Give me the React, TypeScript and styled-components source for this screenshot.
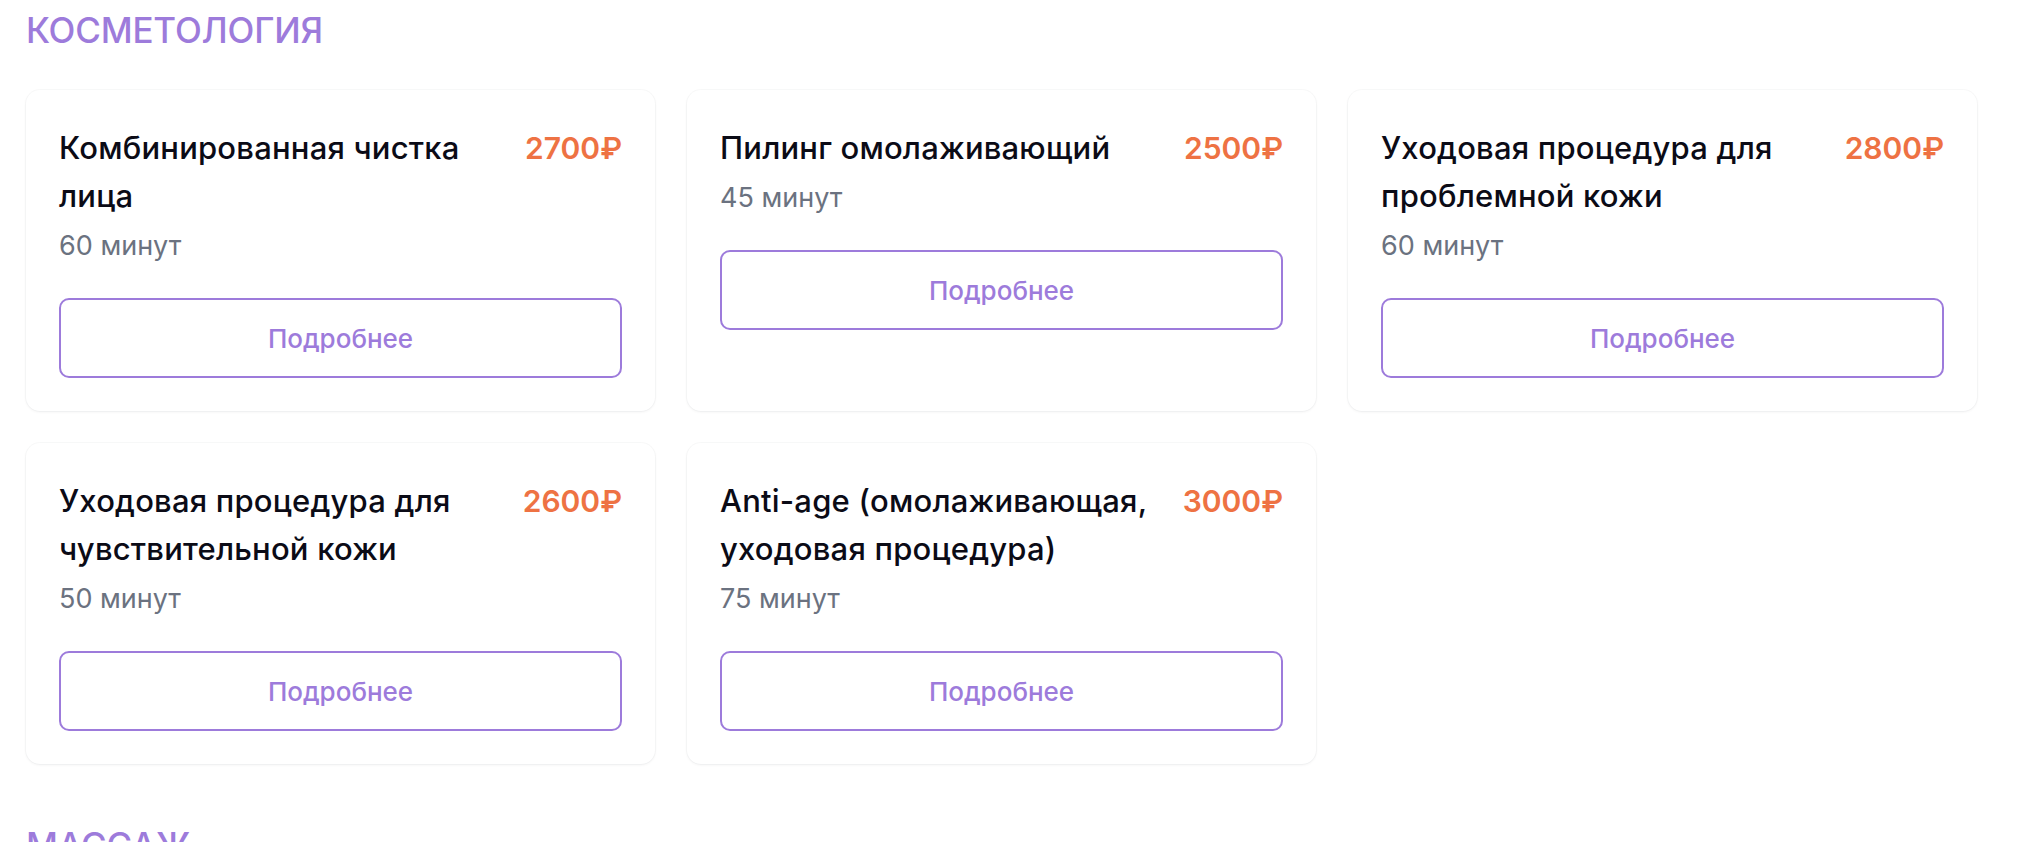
import React from "react";
import styled, { createGlobalStyle } from "styled-components";

const GlobalStyle = createGlobalStyle`
  * { box-sizing: border-box; }
  html, body { margin: 0; padding: 0; background: #ffffff; }
  body {
    font-family: Inter, "Noto Sans", "Liberation Sans", sans-serif;
    -webkit-font-smoothing: antialiased;
  }
`;

const Page = styled.main`
  width: 1977px;
  padding: 8px 0 40px 26px;
`;

const Section = styled.section`
  & + & {
    margin-top: 59px;
  }
`;

const SectionTitle = styled.h2`
  margin: 0;
  font-size: 35px;
  line-height: 44px;
  font-weight: 500;
  letter-spacing: -0.2px;
  color: #9d7bdb;
  text-transform: uppercase;
`;

const Grid = styled.div`
  margin-top: 38px;
  display: grid;
  grid-template-columns: repeat(3, 629px);
  gap: 32px;
`;

const Card = styled.article`
  display: flex;
  flex-direction: column;
  background: #ffffff;
  border-radius: 14px;
  padding: 34px 33px 33px;
  box-shadow: 0 1px 3px rgba(17, 24, 39, 0.06), 0 0 0 1px rgba(17, 24, 39, 0.025);
`;

const CardHead = styled.div`
  display: flex;
  align-items: flex-start;
  justify-content: space-between;
  gap: 32px;
`;

const ServiceName = styled.h3`
  margin: 0;
  flex: 1;
  font-size: 31px;
  line-height: 48px;
  font-weight: 500;
  letter-spacing: 0.2px;
  color: #0b0b16;
`;

const Price = styled.span`
  flex: none;
  font-size: 30px;
  line-height: 48px;
  font-weight: 600;
  color: #ee7243;
`;

const Duration = styled.p`
  margin: 10px 0 0;
  font-size: 27px;
  line-height: 32px;
  font-weight: 400;
  color: #6b7280;
`;

const MoreButton = styled.button`
  margin-top: 36px;
  height: 80px;
  width: 100%;
  border: 2px solid #9d7bdb;
  border-radius: 10px;
  background: #ffffff;
  color: #9d7bdb;
  font-family: inherit;
  font-size: 26px;
  font-weight: 500;
  cursor: pointer;
`;

type Service = { name: string; price: number; minutes: number };

const sections: { title: string; items: Service[] }[] = [
  {
    title: "Косметология",
    items: [
      { name: "Комбинированная чистка лица", price: 2700, minutes: 60 },
      { name: "Пилинг омолаживающий", price: 2500, minutes: 45 },
      { name: "Уходовая процедура для проблемной кожи", price: 2800, minutes: 60 },
      { name: "Уходовая процедура для чувствительной кожи", price: 2600, minutes: 50 },
      { name: "Anti-age (омолаживающая, уходовая процедура)", price: 3000, minutes: 75 },
    ],
  },
  {
    title: "Массаж",
    items: [
      { name: "Классический массаж спины", price: 2000, minutes: 40 },
      { name: "Массаж лица", price: 1800, minutes: 30 },
      { name: "Общий массаж тела", price: 3500, minutes: 90 },
    ],
  },
];

export default function App() {
  return (
    <>
      <GlobalStyle />
      <Page>
        {sections.map((s) => (
          <Section key={s.title}>
            <SectionTitle>{s.title}</SectionTitle>
            <Grid>
              {s.items.map((it) => (
                <Card key={it.name}>
                  <CardHead>
                    <ServiceName>{it.name}</ServiceName>
                    <Price>{it.price}₽</Price>
                  </CardHead>
                  <Duration>{it.minutes} минут</Duration>
                  <MoreButton type="button">Подробнее</MoreButton>
                </Card>
              ))}
            </Grid>
          </Section>
        ))}
      </Page>
    </>
  );
}
